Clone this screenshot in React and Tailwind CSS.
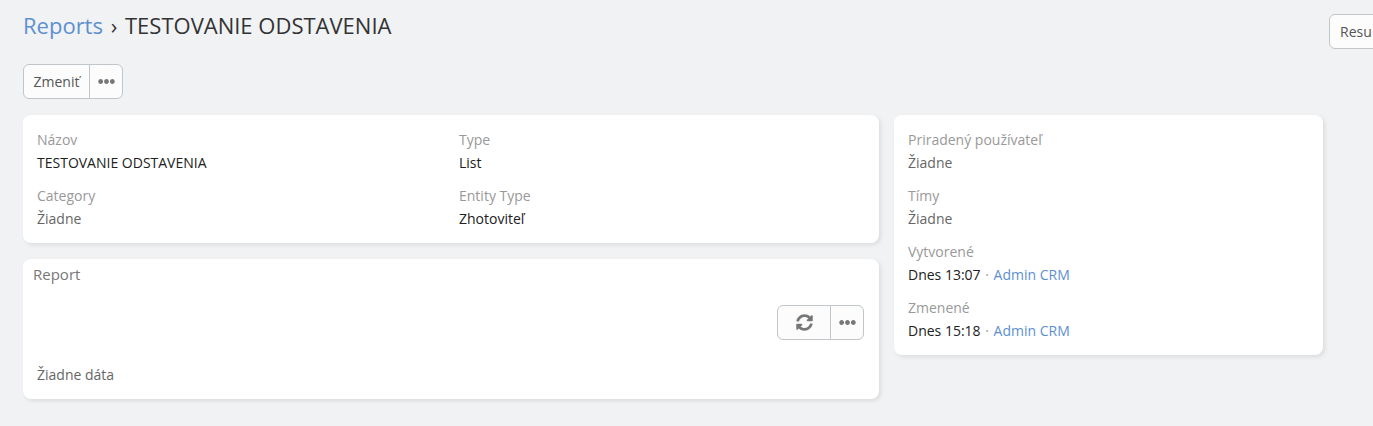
import React from 'react';
import { FaSyncAlt, FaEllipsisH } from 'react-icons/fa';

const button =
  'flex h-[35px] items-center border border-[#c0c6c9] bg-[#fcfcfc] text-[#555] whitespace-nowrap';
const card = 'rounded-lg bg-white shadow-[2px_2px_4px_rgba(0,0,0,0.09)]';

function Field({ label, muted, children }) {
  return (
    <div className="flex flex-col gap-[3px]">
      <dt className="text-[#999]">{label}</dt>
      <dd className={muted ? 'text-[#666]' : 'text-[#212121]'}>{children}</dd>
    </div>
  );
}

function Stamp({ time }) {
  return (
    <>
      {time} <span className="px-px text-[#999]">·</span>{' '}
      <a href="#user" className="text-[#5d90d0]">Admin CRM</a>
    </>
  );
}

export default function App() {
  return (
    <div className="min-h-screen overflow-hidden bg-[#f1f2f4] pb-6 font-['Open_Sans','Noto_Sans',sans-serif] text-sm/5">
      <header className="flex items-start pt-[14px] pl-[23px]">
        <h1 className="flex-1 text-[22px]/[22px] text-[#333]">
          <a href="#reports" className="text-[#5d90d0]">Reports</a>
          <span className="px-[2px]">{' › '}</span>
          TESTOVANIE ODSTAVENIA
        </h1>
        <div className="w-11 shrink-0">
          <button type="button" className={`${button} w-24 rounded-md px-[10px]`}>Resu</button>
        </div>
      </header>

      <main className="pr-[50px] pl-[23px]">
        <div className="mt-[15px] flex">
          <button type="button" className={`${button} w-[67px] justify-center rounded-l-md`}>Zmeniť</button>
          <button type="button" aria-label="Actions" className={`${button} -ml-px w-[34px] justify-center rounded-r-md text-[#777]`}>
            <FaEllipsisH size={17} />
          </button>
        </div>

        <div className="mt-4 grid grid-cols-[856fr_429fr] items-start gap-[15px]">
          <div className="flex flex-col gap-4">
            <section className={`${card} px-[14px] pt-[15px] pb-[14px]`}>
              <dl className="grid grid-cols-2 gap-x-4 gap-y-[13px]">
                <Field label="Názov">TESTOVANIE ODSTAVENIA</Field>
                <Field label="Type">List</Field>
                <Field label="Category" muted>Žiadne</Field>
                <Field label="Entity Type">Zhotoviteľ</Field>
              </dl>
            </section>

            <section className={`${card} pb-[14px]`}>
              <h2 className="px-[10px] pt-[5px] text-[15px]/5 text-[#777]">Report</h2>
              <div className="mt-[21px] flex justify-end pr-[15px]">
                <button type="button" aria-label="Refresh" className={`${button} w-[54px] justify-center rounded-l-md text-[#777]`}>
                  <FaSyncAlt size={17} />
                </button>
                <button type="button" aria-label="Report actions" className={`${button} -ml-px w-[34px] justify-center rounded-r-md text-[#777]`}>
                  <FaEllipsisH size={17} />
                </button>
              </div>
              <p className="mt-[25px] px-[14px] text-[#666]">Žiadne dáta</p>
            </section>
          </div>

          <aside className={`${card} px-[14px] pt-[15px] pb-[14px]`}>
            <dl className="flex flex-col gap-[13px]">
              <Field label="Priradený používateľ" muted>Žiadne</Field>
              <Field label="Tímy" muted>Žiadne</Field>
              <Field label="Vytvorené"><Stamp time="Dnes 13:07" /></Field>
              <Field label="Zmenené"><Stamp time="Dnes 15:18" /></Field>
            </dl>
          </aside>
        </div>
      </main>
    </div>
  );
}
